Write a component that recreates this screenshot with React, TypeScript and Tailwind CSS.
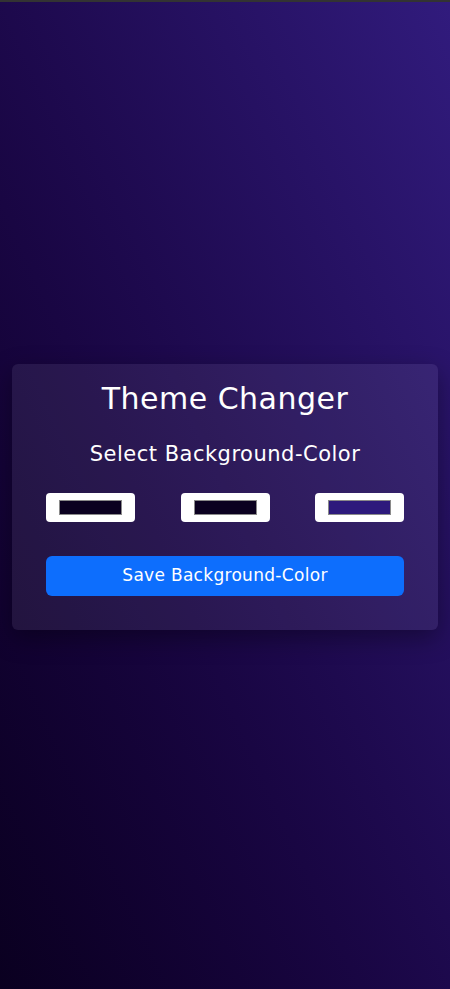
import { useState } from 'react';

const swatches = ['#0b0120', '#0b0120', '#2d1a7c'];

export default function App() {
  const [colors, setColors] = useState(swatches);

  return (
    <div
      className="min-h-[989px] w-full flex items-center justify-center px-3 border-t-2 border-[#333333] bg-gradient-to-tr from-[#0a0020] to-[#311b7d]"
      style={{ fontFamily: '"DejaVu Sans", "Noto Sans", sans-serif' }}
    >
      <div className="w-full mt-[3px] rounded-md bg-white/[0.07] shadow-[0_8px_24px_rgba(0,0,0,0.35)] px-[34px] pt-[14px] pb-[34px] flex flex-col items-center">
        <h1 className="text-[30px] leading-[42px] tracking-[0.5px] text-white">Theme Changer</h1>
        <h2 className="mt-[20px] text-[21px] leading-[28px] tracking-[0.5px] text-white">Select Background-Color</h2>

        <div className="mt-[25px] w-full flex justify-between">
          {colors.map((c, i) => (
            <label
              key={i}
              className="w-[89px] h-[29px] rounded-[4px] bg-white flex items-center justify-center cursor-pointer"
            >
              <span className="block w-[63px] h-[15px] border border-[#8a8a8a]" style={{ backgroundColor: c }} />
              <input
                type="color"
                value={c}
                onChange={(e) => setColors(colors.map((x, j) => (j === i ? e.target.value : x)))}
                className="hidden"
              />
            </label>
          ))}
        </div>

        <button className="mt-[34px] w-full h-[40px] rounded-md bg-[#0d6efd] text-white text-[17px] tracking-[0.3px]">
          Save Background-Color
        </button>
      </div>
    </div>
  );
}
